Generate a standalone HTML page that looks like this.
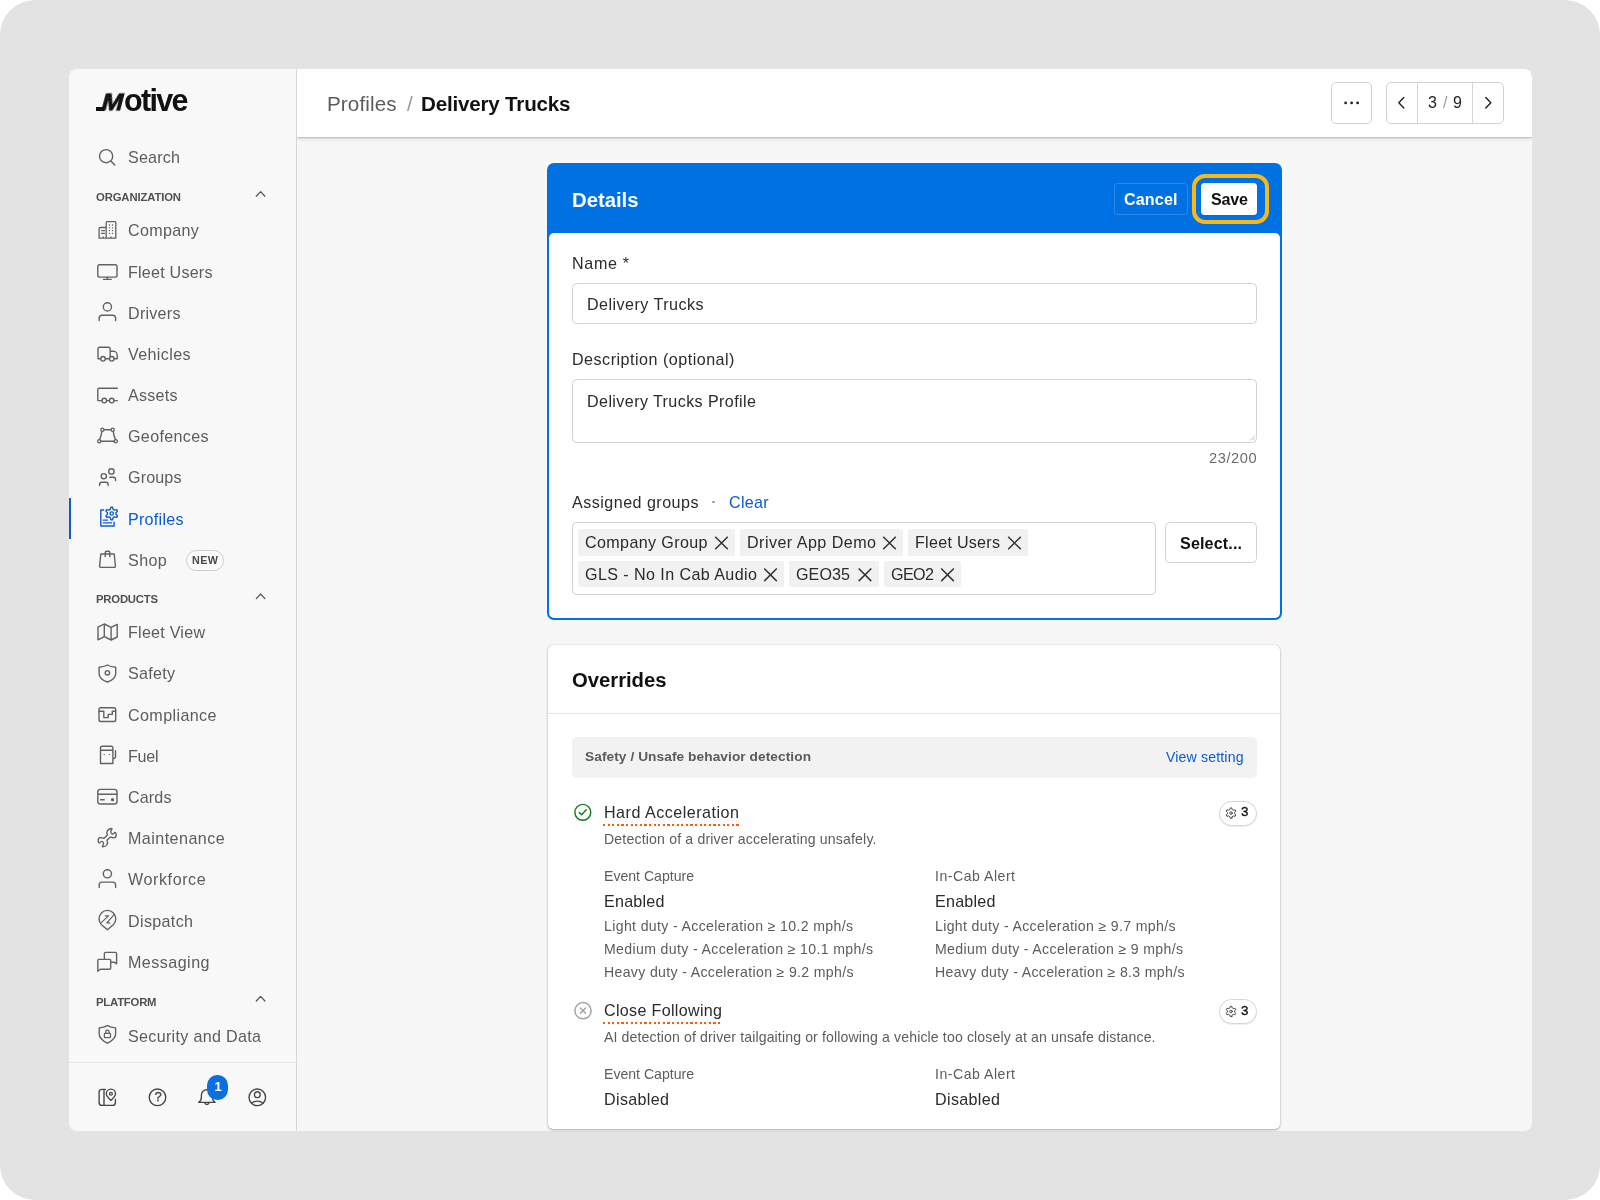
<!DOCTYPE html>
<html lang="en">
<head>
<meta charset="utf-8">
<title>Profiles / Delivery Trucks</title>
<style>
html,body{margin:0;padding:0;}
body{width:1600px;height:1200px;position:relative;overflow:hidden;background:#fff;font-family:"Liberation Sans",sans-serif;}
.t{position:absolute;white-space:nowrap;will-change:transform;}
.a{position:absolute;box-sizing:border-box;}
svg{position:absolute;overflow:visible;}
.ic{fill:none;stroke:#626262;stroke-width:1.4;stroke-linecap:round;stroke-linejoin:round;}
.icb{fill:none;stroke:#0c5bd1;stroke-width:1.4;stroke-linecap:round;stroke-linejoin:round;}
</style>
</head>
<body>
<div class="a" style="left:0;top:0;width:1600px;height:1200px;background:#e3e3e3;border-radius:35px"></div>
<div class="a" style="left:68.5px;top:68.5px;width:1463px;height:1062.5px;background:#f7f7f7;border-radius:8px;overflow:hidden">
<div class="a" style="left:228.5px;top:0;width:1235px;height:68px;background:#fff;box-shadow:0 1px 1.5px rgba(0,0,0,.2),0 2px 5px rgba(0,0,0,.10)"></div>
<div class="a" style="left:0;top:0;width:228.5px;height:1062.5px;background:#f8f8f8;border-right:1px solid #d6d6d6"></div>
<div class="a" style="left:0;top:993.5px;width:228px;height:1px;background:#e6e6e6"></div>
<div class="a" style="left:0;top:429.8px;width:2px;height:40.8px;background:#0c5bd1"></div>
</div>
<nav>
<div class="a" style="left:96.2px;top:107.3px;width:8px;height:4px;background:#111"></div>
<span class="t" style="left:99.6px;top:87.42px;font-size:22.6px;line-height:32px;color:#111;font-weight:700;-webkit-text-stroke:0.8px #111;transform:skewX(-15deg) scaleX(1.13);transform-origin:0 75%;">M</span>
<span class="t" style="left:124px;top:79.32px;font-size:30.5px;line-height:43px;color:#111;font-weight:700;letter-spacing:-1.672px;">otive</span>
<span class="t" style="left:127.9px;top:146.04px;font-size:16.1px;line-height:23px;color:#5c5c5c;letter-spacing:0.200px;">Search</span>
<span class="t" style="left:95.9px;top:189.04px;font-size:11.3px;line-height:16px;color:#505050;font-weight:700;letter-spacing:-0.128px;">ORGANIZATION</span>
<span class="t" style="left:127.9px;top:219.34px;font-size:16.1px;line-height:23px;color:#5c5c5c;letter-spacing:0.302px;">Company</span>
<span class="t" style="left:127.9px;top:260.54px;font-size:16.1px;line-height:23px;color:#5c5c5c;letter-spacing:0.222px;">Fleet Users</span>
<span class="t" style="left:127.9px;top:301.64px;font-size:16.1px;line-height:23px;color:#5c5c5c;letter-spacing:0.255px;">Drivers</span>
<span class="t" style="left:127.9px;top:342.84px;font-size:16.1px;line-height:23px;color:#5c5c5c;letter-spacing:0.364px;">Vehicles</span>
<span class="t" style="left:127.9px;top:384.04px;font-size:16.1px;line-height:23px;color:#5c5c5c;letter-spacing:0.237px;">Assets</span>
<span class="t" style="left:127.9px;top:425.24px;font-size:16.1px;line-height:23px;color:#5c5c5c;letter-spacing:0.332px;">Geofences</span>
<span class="t" style="left:127.9px;top:466.44px;font-size:16.1px;line-height:23px;color:#5c5c5c;letter-spacing:0.144px;">Groups</span>
<span class="t" style="left:127.9px;top:507.54px;font-size:16.1px;line-height:23px;color:#0c5bd1;letter-spacing:0.261px;">Profiles</span>
<span class="t" style="left:127.9px;top:548.74px;font-size:16.1px;line-height:23px;color:#5c5c5c;letter-spacing:0.402px;">Shop</span>
<div class="a" style="left:186px;top:550px;width:37.6px;height:20.5px;border:1px solid #cdcdcd;border-radius:10.3px;background:#fafafa"></div>
<span class="t" style="left:191.6px;top:552.53px;font-size:10.8px;line-height:15px;color:#4a4a4a;font-weight:700;letter-spacing:0.398px;">NEW</span>
<span class="t" style="left:95.7px;top:591.44px;font-size:11.3px;line-height:16px;color:#505050;font-weight:700;letter-spacing:-0.199px;">PRODUCTS</span>
<span class="t" style="left:127.9px;top:621.24px;font-size:16.1px;line-height:23px;color:#5c5c5c;letter-spacing:0.240px;">Fleet View</span>
<span class="t" style="left:127.9px;top:662.44px;font-size:16.1px;line-height:23px;color:#5c5c5c;letter-spacing:0.272px;">Safety</span>
<span class="t" style="left:127.9px;top:703.64px;font-size:16.1px;line-height:23px;color:#5c5c5c;letter-spacing:0.391px;">Compliance</span>
<span class="t" style="left:127.9px;top:744.84px;font-size:16.1px;line-height:23px;color:#5c5c5c;letter-spacing:-0.271px;">Fuel</span>
<span class="t" style="left:127.9px;top:786.04px;font-size:16.1px;line-height:23px;color:#5c5c5c;letter-spacing:0.141px;">Cards</span>
<span class="t" style="left:127.9px;top:827.24px;font-size:16.1px;line-height:23px;color:#5c5c5c;letter-spacing:0.454px;">Maintenance</span>
<span class="t" style="left:127.9px;top:868.44px;font-size:16.1px;line-height:23px;color:#5c5c5c;letter-spacing:0.582px;">Workforce</span>
<span class="t" style="left:127.9px;top:909.64px;font-size:16.1px;line-height:23px;color:#5c5c5c;letter-spacing:0.339px;">Dispatch</span>
<span class="t" style="left:127.9px;top:950.84px;font-size:16.1px;line-height:23px;color:#5c5c5c;letter-spacing:0.457px;">Messaging</span>
<span class="t" style="left:95.7px;top:993.64px;font-size:11.3px;line-height:16px;color:#505050;font-weight:700;letter-spacing:-0.203px;">PLATFORM</span>
<span class="t" style="left:127.9px;top:1024.54px;font-size:16.1px;line-height:23px;color:#5c5c5c;letter-spacing:0.316px;">Security and Data</span>
</nav>
<header>
<span class="t" style="left:327.3px;top:89.20px;font-size:20.6px;line-height:29px;color:#5c5c5c;letter-spacing:0.118px;">Profiles</span>
<span class="t" style="left:406.5px;top:89.20px;font-size:20.6px;line-height:29px;color:#9a9a9a;">/</span>
<span class="t" style="left:421px;top:89.20px;font-size:20.6px;line-height:29px;color:#111;font-weight:700;letter-spacing:-0.198px;">Delivery Trucks</span>
<div class="a" style="left:1331px;top:82px;width:41px;height:41.5px;border:1px solid #d2d2d2;border-radius:5px;background:#fff"></div>
<div class="a" style="left:1386px;top:82px;width:118px;height:41.5px;border:1px solid #d2d2d2;border-radius:5px;background:#fff"></div>
<div class="a" style="left:1417px;top:82.5px;width:1px;height:40.5px;background:#d6d6d6"></div>
<div class="a" style="left:1472px;top:82.5px;width:1px;height:40.5px;background:#d6d6d6"></div>
<span class="t" style="left:1428px;top:92.04px;font-size:16px;line-height:22px;color:#222;">3</span>
<span class="t" style="left:1443px;top:92.04px;font-size:16px;line-height:22px;color:#a0a0a0;">/</span>
<span class="t" style="left:1453px;top:92.04px;font-size:16px;line-height:22px;color:#222;">9</span>
</header>
<main>
<section>
<div class="a" style="left:547px;top:163px;width:734.5px;height:456.5px;background:#0071e3;border-radius:7px"></div>
<div class="a" style="left:549.2px;top:232.9px;width:730.8px;height:384.7px;background:#fff;border-radius:5px"></div>
<span class="t" style="left:571.5px;top:185.99px;font-size:20.3px;line-height:28px;color:#fff;font-weight:700;letter-spacing:-0.003px;">Details</span>
<div class="a" style="left:1113.5px;top:183px;width:74px;height:32px;border:1px solid #2f89ea;border-radius:3.5px"></div>
<span class="t" style="left:1124px;top:187.54px;font-size:16.1px;line-height:23px;color:#fff;font-weight:700;letter-spacing:0.144px;">Cancel</span>
<div class="a" style="left:1192.2px;top:173.6px;width:76.7px;height:50.4px;border:4.6px solid #fab818;border-radius:13px"></div>
<div class="a" style="left:1201px;top:182.5px;width:56px;height:32.7px;background:#fff;border-radius:3.5px"></div>
<span class="t" style="left:1210.5px;top:187.54px;font-size:16.1px;line-height:23px;color:#111;font-weight:700;letter-spacing:-0.198px;">Save</span>
<span class="t" style="left:571.5px;top:251.74px;font-size:16.1px;line-height:23px;color:#2b2b2b;letter-spacing:0.666px;">Name *</span>
<div class="a" style="left:571.5px;top:283px;width:685.5px;height:41.3px;border:1px solid #d3d3d3;border-radius:4.5px;background:#fff"></div>
<span class="t" style="left:586.5px;top:292.84px;font-size:16.1px;line-height:23px;color:#2b2b2b;letter-spacing:0.464px;">Delivery Trucks</span>
<span class="t" style="left:571.5px;top:347.74px;font-size:16.1px;line-height:23px;color:#2b2b2b;letter-spacing:0.496px;">Description (optional)</span>
<div class="a" style="left:571.5px;top:379.2px;width:685.5px;height:64px;border:1px solid #d3d3d3;border-radius:4.5px;background:#fff"></div>
<span class="t" style="left:586.5px;top:389.84px;font-size:16.1px;line-height:23px;color:#2b2b2b;letter-spacing:0.405px;">Delivery Trucks Profile</span>
<span class="t" style="right:343px;top:447.98px;font-size:14.6px;line-height:20px;color:#6b6b6b;letter-spacing:0.572px;">23/200</span>
<span class="t" style="left:571.5px;top:490.54px;font-size:16.1px;line-height:23px;color:#2b2b2b;letter-spacing:0.472px;">Assigned groups</span>
<div class="a" style="left:712px;top:500.5px;width:2.6px;height:2.6px;border-radius:2px;background:#9a9a9a"></div>
<span class="t" style="left:728.5px;top:490.54px;font-size:16.1px;line-height:23px;color:#0c5bd1;letter-spacing:0.258px;">Clear</span>
<div class="a" style="left:571.5px;top:522px;width:584.5px;height:72.8px;border:1px solid #d3d3d3;border-radius:4.5px;background:#fff"></div>
<div class="a" style="left:578px;top:529.2px;width:157px;height:26.6px;background:#f1f1f1;border-radius:2.5px"></div>
<span class="t" style="left:585.2px;top:531.34px;font-size:16.1px;line-height:23px;color:#2b2b2b;letter-spacing:0.367px;">Company Group</span>
<div class="a" style="left:740px;top:529.2px;width:163px;height:26.6px;background:#f1f1f1;border-radius:2.5px"></div>
<span class="t" style="left:747.2px;top:531.34px;font-size:16.1px;line-height:23px;color:#2b2b2b;letter-spacing:0.461px;">Driver App Demo</span>
<div class="a" style="left:908px;top:529.2px;width:120px;height:26.6px;background:#f1f1f1;border-radius:2.5px"></div>
<span class="t" style="left:915.2px;top:531.34px;font-size:16.1px;line-height:23px;color:#2b2b2b;letter-spacing:0.272px;">Fleet Users</span>
<div class="a" style="left:578px;top:560.9px;width:206px;height:26.6px;background:#f1f1f1;border-radius:2.5px"></div>
<span class="t" style="left:585.2px;top:563.04px;font-size:16.1px;line-height:23px;color:#2b2b2b;letter-spacing:0.414px;">GLS - No In Cab Audio</span>
<div class="a" style="left:789px;top:560.9px;width:89.5px;height:26.6px;background:#f1f1f1;border-radius:2.5px"></div>
<span class="t" style="left:796.2px;top:563.04px;font-size:16.1px;line-height:23px;color:#2b2b2b;letter-spacing:0.078px;">GEO35</span>
<div class="a" style="left:883.5px;top:560.9px;width:77.5px;height:26.6px;background:#f1f1f1;border-radius:2.5px"></div>
<span class="t" style="left:890.7px;top:563.04px;font-size:16.1px;line-height:23px;color:#2b2b2b;letter-spacing:-0.578px;">GEO2</span>
<div class="a" style="left:1165px;top:522px;width:92px;height:41px;border:1px solid #d3d3d3;border-radius:4.5px;background:#fff"></div>
<span class="t" style="left:1180px;top:531.54px;font-size:16.1px;line-height:23px;color:#111;font-weight:700;letter-spacing:0.145px;">Select...</span>
</section>
<section>
<div class="a" style="left:547.5px;top:645px;width:732.8px;height:484.3px;background:#fff;border-radius:5px;box-shadow:0 1px 2.5px rgba(0,0,0,.3),0 0 1px rgba(0,0,0,.25)"></div>
<span class="t" style="left:572px;top:665.59px;font-size:20.3px;line-height:28px;color:#111;font-weight:700;letter-spacing:-0.025px;">Overrides</span>
<div class="a" style="left:548px;top:713px;width:732.5px;height:1px;background:#e4e4e4"></div>
<div class="a" style="left:571.5px;top:737px;width:685.5px;height:41px;background:#f2f2f2;border-radius:5px"></div>
<span class="t" style="left:585px;top:747.26px;font-size:13.7px;line-height:19px;color:#5a5a5a;font-weight:700;letter-spacing:0.072px;">Safety / Unsafe behavior detection</span>
<span class="t" style="right:356.5px;top:746.77px;font-size:14.1px;line-height:20px;color:#0c5bd1;letter-spacing:0.161px;">View setting</span>
<span class="t" style="left:603.7px;top:800.84px;font-size:16.1px;line-height:23px;color:#2b2b2b;letter-spacing:0.498px;">Hard Acceleration</span>
<div class="a" style="left:603.2px;top:823.70px;width:136.2px;height:2.1px;background:repeating-linear-gradient(90deg,#fa5c0c 0,#fa5c0c 2.2px,transparent 2.2px,transparent 4.6px)"></div>
<span class="t" style="left:603.7px;top:828.87px;font-size:14.1px;line-height:20px;color:#5c5c5c;letter-spacing:0.167px;">Detection of a driver accelerating unsafely.</span>
<div class="a" style="left:1218.7px;top:800.8px;width:38.3px;height:24.8px;border:1px solid #d6d6d6;border-radius:12.5px;background:#fff;box-shadow:0 1px 1px rgba(0,0,0,.07)"></div>
<span class="t" style="left:1240.9px;top:802.26px;font-size:13.4px;line-height:19px;color:#111;-webkit-text-stroke:0.35px #111;">3</span>
<span class="t" style="left:603.7px;top:999.24px;font-size:16.1px;line-height:23px;color:#2b2b2b;letter-spacing:0.314px;">Close Following</span>
<div class="a" style="left:603.2px;top:1022.1px;width:119.2px;height:2.1px;background:repeating-linear-gradient(90deg,#fa5c0c 0,#fa5c0c 2.2px,transparent 2.2px,transparent 4.6px)"></div>
<span class="t" style="left:603.7px;top:1027.27px;font-size:14.1px;line-height:20px;color:#5c5c5c;letter-spacing:0.129px;">AI detection of driver tailgaiting or following a vehicle too closely at an unsafe distance.</span>
<div class="a" style="left:1218.7px;top:999.2px;width:38.3px;height:24.8px;border:1px solid #d6d6d6;border-radius:12.5px;background:#fff;box-shadow:0 1px 1px rgba(0,0,0,.07)"></div>
<span class="t" style="left:1240.9px;top:1000.66px;font-size:13.4px;line-height:19px;color:#111;-webkit-text-stroke:0.35px #111;">3</span>
<span class="t" style="left:603.7px;top:865.57px;font-size:14.1px;line-height:20px;color:#5c5c5c;letter-spacing:-0.009px;">Event Capture</span>
<span class="t" style="left:935px;top:865.57px;font-size:14.1px;line-height:20px;color:#5c5c5c;letter-spacing:0.507px;">In-Cab Alert</span>
<span class="t" style="left:603.7px;top:889.84px;font-size:16.1px;line-height:23px;color:#2b2b2b;letter-spacing:0.237px;">Enabled</span>
<span class="t" style="left:935px;top:889.84px;font-size:16.1px;line-height:23px;color:#2b2b2b;letter-spacing:0.237px;">Enabled</span>
<span class="t" style="left:603.7px;top:1063.77px;font-size:14.1px;line-height:20px;color:#5c5c5c;letter-spacing:-0.009px;">Event Capture</span>
<span class="t" style="left:935px;top:1063.77px;font-size:14.1px;line-height:20px;color:#5c5c5c;letter-spacing:0.507px;">In-Cab Alert</span>
<span class="t" style="left:603.7px;top:1088.04px;font-size:16.1px;line-height:23px;color:#2b2b2b;letter-spacing:0.339px;">Disabled</span>
<span class="t" style="left:935px;top:1088.04px;font-size:16.1px;line-height:23px;color:#2b2b2b;letter-spacing:0.339px;">Disabled</span>
<span class="t" style="left:603.7px;top:915.97px;font-size:14.1px;line-height:20px;color:#5c5c5c;letter-spacing:0.359px;">Light duty - Acceleration ≥ 10.2 mph/s</span>
<span class="t" style="left:603.7px;top:938.87px;font-size:14.1px;line-height:20px;color:#5c5c5c;letter-spacing:0.361px;">Medium duty - Acceleration ≥ 10.1 mph/s</span>
<span class="t" style="left:603.7px;top:961.77px;font-size:14.1px;line-height:20px;color:#5c5c5c;letter-spacing:0.340px;">Heavy duty - Acceleration ≥ 9.2 mph/s</span>
<span class="t" style="left:935px;top:915.97px;font-size:14.1px;line-height:20px;color:#5c5c5c;letter-spacing:0.351px;">Light duty - Acceleration ≥ 9.7 mph/s</span>
<span class="t" style="left:935px;top:938.87px;font-size:14.1px;line-height:20px;color:#5c5c5c;letter-spacing:0.352px;">Medium duty - Acceleration ≥ 9 mph/s</span>
<span class="t" style="left:935px;top:961.77px;font-size:14.1px;line-height:20px;color:#5c5c5c;letter-spacing:0.340px;">Heavy duty - Acceleration ≥ 8.3 mph/s</span>
</section>
</main>
<svg width="1600" height="1200" viewBox="0 0 1600 1200" style="left:0;top:0">
<circle class="ic" cx="106.1" cy="156.2" r="6.6" />
<path class="ic" d="M110.9 161 L114.8 165" />
<path class="ic" d="M256.3 196.2 L260.6 191.6 L264.9 196.2" style="stroke:#555;stroke-width:1.25"/>
<path class="ic" d="M256.3 598.6 L260.6 594.0 L264.9 598.6" style="stroke:#555;stroke-width:1.25"/>
<path class="ic" d="M256.3 1001.0 L260.6 996.4 L264.9 1001.0" style="stroke:#555;stroke-width:1.25"/>
<path class="ic" d="M106.2 238.2 V222.6 a1 1 0 0 1 1 -1 H114.8 a1 1 0 0 1 1 1 V238.2 Z M99.1 238.2 V228.5 a1 1 0 0 1 1 -1 H106.2 M99.1 238.2 H106.2" style="stroke-width:1.3"/>
<rect x="108.85" y="224.35" width="1.3" height="1.3" rx="0.4" fill="#5e5e5e"/>
<rect x="111.85" y="224.35" width="1.3" height="1.3" rx="0.4" fill="#5e5e5e"/>
<rect x="108.85" y="227.15" width="1.3" height="1.3" rx="0.4" fill="#5e5e5e"/>
<rect x="111.85" y="227.15" width="1.3" height="1.3" rx="0.4" fill="#5e5e5e"/>
<rect x="108.85" y="229.95" width="1.3" height="1.3" rx="0.4" fill="#5e5e5e"/>
<rect x="111.85" y="229.95" width="1.3" height="1.3" rx="0.4" fill="#5e5e5e"/>
<rect x="108.85" y="232.75" width="1.3" height="1.3" rx="0.4" fill="#5e5e5e"/>
<rect x="111.85" y="232.75" width="1.3" height="1.3" rx="0.4" fill="#5e5e5e"/>
<path class="ic" d="M101.6 230.6 H104.6 M101.6 233.4 H104.6" style="stroke-width:1.1"/>
<path class="ic" d="M103.2 238.2 V236.6 M110.9 238.2 V236.6" style="stroke-width:1.3;stroke-linecap:butt"/>
<rect class="ic" x="97.8" y="264.8" width="19.2" height="12.3" rx="1.8" />
<path class="ic" d="M107.4 277.1 V279.3 M103.6 279.4 H111.2" />
<circle class="ic" cx="107.4" cy="306.9" r="4.1" />
<path class="ic" d="M99.2 320.6 V318 a2.8 2.8 0 0 1 2.8 -2.8 H112.8 a2.8 2.8 0 0 1 2.8 2.8 V320.6" />
<circle class="ic" cx="107.4" cy="873.8" r="4.1" />
<path class="ic" d="M99.2 887.5 V884.9 a2.8 2.8 0 0 1 2.8 -2.8 H112.8 a2.8 2.8 0 0 1 2.8 2.8 V887.5" />
<path class="ic" d="M100.6 358.8 H98 V348.6 a1.3 1.3 0 0 1 1.3 -1.3 H108.6 a1.6 1.6 0 0 1 1.6 1.6 V356.6 M110.2 351.3 H113.6 C115.8 351.3 117.2 353.4 117.2 355.2 V358.8 H114.2 M105.4 358.8 H109.4" />
<circle class="ic" cx="103" cy="358.8" r="2.3" />
<circle class="ic" cx="111.8" cy="358.8" r="2.3" />
<path class="ic" d="M117.3 388.2 H99 a1.2 1.2 0 0 0 -1.2 1.2 V400.6 H101.9 M106.6 400.6 H109.4 M114 400.6 H117.3" />
<circle class="ic" cx="104.3" cy="400.6" r="2.3" />
<circle class="ic" cx="111.7" cy="400.6" r="2.3" />
<circle class="ic" cx="102.4" cy="429.8" r="1.6" style="stroke-width:1.3"/>
<circle class="ic" cx="112.7" cy="429.8" r="1.6" style="stroke-width:1.3"/>
<circle class="ic" cx="99.2" cy="441.2" r="1.6" style="stroke-width:1.3"/>
<circle class="ic" cx="115.8" cy="441.2" r="1.6" style="stroke-width:1.3"/>
<path class="ic" d="M104 429.8 H111.1 M101.9 431.4 C101.4 435 100.6 437.5 99.6 439.6 M113.2 431.4 C113.7 435 114.5 437.5 115.4 439.6 M100.8 441.2 H114.2" style="stroke-width:1.4"/>
<circle class="ic" cx="111.4" cy="471.4" r="2.7" style="stroke-width:1.4"/>
<circle class="ic" cx="103.8" cy="476.2" r="2.6" style="stroke-width:1.4"/>
<path class="ic" d="M99.6 485.6 V484.4 a2.2 2.2 0 0 1 2.2 -2.2 H106 a2.2 2.2 0 0 1 2.2 2.2 V485.6 M109.8 477.2 H113.4 a2.2 2.2 0 0 1 2.2 2.2 V480.6" style="stroke-width:1.4"/>
<path class="icb" d="M103.7 510 H100.8 V526 H114.1 V522.2" />
<path class="icb" d="M103.3 520.2 H107.6 M103.3 522.9 H111.6" style="stroke-width:1.3"/>
<path class="icb" d="M112.56 519.74 L110.84 519.74 L110.24 517.55 L108.92 516.78 L106.72 517.36 L105.87 515.88 L107.47 514.26 L107.47 512.74 L105.87 511.12 L106.72 509.64 L108.92 510.22 L110.24 509.45 L110.84 507.26 L112.56 507.26 L113.16 509.45 L114.48 510.22 L116.68 509.64 L117.53 511.12 L115.93 512.74 L115.93 514.26 L117.53 515.88 L116.68 517.36 L114.48 516.78 L113.16 517.55 Z" style="stroke-width:1.35"/>
<circle class="icb" cx="111.7" cy="513.5" r="1.7" style="stroke-width:1.3"/>
<path class="ic" d="M100.8 554 H114.2 L115.4 566 a1.3 1.3 0 0 1 -1.3 1.4 H100.9 a1.3 1.3 0 0 1 -1.3 -1.4 Z M105.2 556.6 V552.6 a1.4 1.4 0 0 1 1.4 -1.4 H108.4 a1.4 1.4 0 0 1 1.4 1.4 V556.6" />
<path class="ic" d="M98 627.2 L104.3 624 L111.1 627.4 L117.2 624.4 V637 L111.1 640 L104.3 636.6 L98 639.8 Z M104.3 624 V636.6 M111.1 627.4 V640" />
<path class="ic" d="M107.4 665 Q103.9 666.8 99.10 667.3 V673.4 C99.10 677.8 103.0 680.4 107.4 682 C111.80 680.4 115.7 677.8 115.7 673.4 V667.3 Q110.9 666.8 107.4 665 Z" />
<circle class="ic" cx="107.4" cy="672.8" r="2.2" />
<rect class="ic" x="99" y="707.8" width="16.7" height="13.7" rx="1.8" />
<path class="ic" d="M99 711.2 H103.8 V717.6 H108.2 V714.4 H112.3 V711.2 H115.7" style="stroke-width:1.4"/>
<path class="ic" d="M100.5 763.5 V748 a1.7 1.7 0 0 1 1.7 -1.7 H111.2 a1.7 1.7 0 0 1 1.7 1.7 V763.5 Z M100.5 750.2 H112.9 M112.9 758.6 H113.6 a1.9 1.9 0 0 0 1.9 -1.9 V750.8" />
<circle class="ic" cx="104.2" cy="754.6" r="0.7" style="fill:#5e5e5e;stroke:none"/>
<circle class="ic" cx="109.5" cy="754.6" r="0.7" style="fill:#5e5e5e;stroke:none"/>
<rect class="ic" x="97.8" y="789.4" width="19.2" height="14.6" rx="2.6" />
<path class="ic" d="M97.8 794.2 H117 M100.6 799.7 H104.2" />
<circle class="ic" cx="112.5" cy="799.7" r="1.6" style="fill:#5e5e5e;stroke:none"/>
<path class="ic" d="M0.2 -2.6 C-1.2 -5.5 0.2 -8.8 4.1 -9.2 Q5 -9.2 4.7 -8.4 C3.4 -7 3 -4.2 5.2 -3.7 C6.2 -3.5 7 -4.4 7.6 -5.2 Q8.6 -5.4 8.9 -3.9 C9.2 -2 8.8 -0.6 7.6 0 C6 0.6 4.2 -1 2.8 -0.4 L-0.2 2.6 C1.2 5.5 -0.2 8.8 -4.1 9.2 Q-5 9.2 -4.7 8.4 C-3.4 7 -3 4.2 -5.2 3.7 C-6.2 3.5 -7 4.4 -7.6 5.2 Q-8.6 5.4 -8.9 3.9 C-9.2 2 -8.8 0.6 -7.6 0 C-6 -0.6 -4.2 1 -2.8 0.4 Z" transform="translate(107.2 837.7)" style="stroke-width:1.35"/>
<path class="ic" d="M107.4 929.8 L101.5 924.8 A8.4 8.4 0 1 1 113.3 924.8 Z" />
<path class="ic" d="M101.2 922.6 L108.6 915.9 H105.2 M114.4 914.4 L106.8 922.9 H109.8" style="stroke-width:1.2"/>
<path class="ic" d="M104.4 958.6 V953.6 a1.2 1.2 0 0 1 1.2 -1.2 H115.4 a1.2 1.2 0 0 1 1.2 1.2 V963.8 L114.2 962.2 H111.4" />
<path class="ic" d="M99 959.4 H109.5 a1.2 1.2 0 0 1 1.2 1.2 V968 a1.2 1.2 0 0 1 -1.2 1.2 H100.4 L97.8 971.2 V960.6 a1.2 1.2 0 0 1 1.2 -1.2 Z" />
<path class="ic" d="M107.4 1025.6 Q103.9 1027.40 99.2 1027.90 V1034.0 C99.2 1038.40 103.0 1041.0 107.4 1043.20 C111.80 1041.0 115.60 1038.40 115.60 1034.0 V1027.90 Q110.9 1027.40 107.4 1025.6 Z" />
<rect class="ic" x="104.4" y="1033.3" width="6.1" height="4.3" rx="0.7" style="stroke-width:1.3"/>
<path class="ic" d="M105.8 1033.3 V1031.7 a1.65 1.65 0 0 1 3.3 0 V1033.3" style="stroke-width:1.3"/>
<path class="ic" d="M105.4 1089.3 H102.1 a3 3 0 0 0 -3 3 V1102.4 a3 3 0 0 0 3 3 H112.4 a3 3 0 0 0 3 -3 V1099.4 M104 1089.3 V1105.4" style="stroke:#444;stroke-width:1.35"/>
<path class="ic" d="M110.9 1100.4 C108 1097.6 106.3 1095.8 106.3 1093.7 a4.6 4.6 0 0 1 9.2 0 C115.5 1095.8 113.8 1097.6 110.9 1100.4 Z" style="stroke:#444;stroke-width:1.35"/>
<circle class="ic" cx="110.9" cy="1093.7" r="1.5" style="stroke:#444;stroke-width:1.1;fill:#bbb"/>
<circle class="ic" cx="157.5" cy="1097.3" r="8.3" style="stroke:#444;stroke-width:1.35"/>
<path class="ic" d="M198.7 1102.4 c1.7 -1 2.7 -2.6 2.7 -5.4 v-1.8 a5.5 5.5 0 0 1 11 0 v1.8 c0 2.8 1 4.4 2.7 5.4 Z M204.7 1102.9 a2.3 2.3 0 0 0 4.4 0" style="stroke:#444;stroke-width:1.35"/>
<circle class="ic" cx="257.3" cy="1097.3" r="8.3" style="stroke:#444;stroke-width:1.35"/>
<circle class="ic" cx="257.3" cy="1094.7" r="2.9" style="stroke:#444;stroke-width:1.35"/>
<path class="ic" d="M251.7 1103.3 a6.6 4.6 0 0 1 11.2 0" style="stroke:#444;stroke-width:1.35"/>
<circle class="ic" cx="1345.6" cy="102.9" r="1.4" style="fill:#222;stroke:none"/>
<circle class="ic" cx="1351.6" cy="102.9" r="1.4" style="fill:#222;stroke:none"/>
<circle class="ic" cx="1357.6" cy="102.9" r="1.4" style="fill:#222;stroke:none"/>
<path class="ic" d="M1403.8 97.6 L1398.8 102.8 L1403.8 108" style="stroke:#222;stroke-width:1.4"/>
<path class="ic" d="M1485.8 97.6 L1490.8 102.8 L1485.8 108" style="stroke:#222;stroke-width:1.4"/>
<path class="ic" d="M715.2 536.7 L727.8 549.3 M727.8 536.7 L715.2 549.3" style="stroke:#333;stroke-width:1.5;stroke-linecap:butt"/>
<path class="ic" d="M883.2 536.7 L895.8 549.3 M895.8 536.7 L883.2 549.3" style="stroke:#333;stroke-width:1.5;stroke-linecap:butt"/>
<path class="ic" d="M1008.2 536.7 L1020.8 549.3 M1020.8 536.7 L1008.2 549.3" style="stroke:#333;stroke-width:1.5;stroke-linecap:butt"/>
<path class="ic" d="M764.2 568.5 L776.8 581.10 M776.8 568.5 L764.2 581.10" style="stroke:#333;stroke-width:1.5;stroke-linecap:butt"/>
<path class="ic" d="M858.7 568.5 L871.3 581.10 M871.3 568.5 L858.7 581.10" style="stroke:#333;stroke-width:1.5;stroke-linecap:butt"/>
<path class="ic" d="M941.2 568.5 L953.8 581.10 M953.8 568.5 L941.2 581.10" style="stroke:#333;stroke-width:1.5;stroke-linecap:butt"/>
<path class="ic" d="M1253.4 439.6 L1254.6 438.4 M1250.6 440 L1254.8 435.8" style="stroke:#aaa;stroke-width:0.7"/>
<circle class="ic" cx="582.8" cy="812.3" r="7.95" style="stroke:#137a22;stroke-width:1.45"/>
<path class="ic" d="M579.2 812.4 L581.6 814.7 L586.3 809.8" style="stroke:#137a22;stroke-width:1.45"/>
<circle class="ic" cx="583" cy="1010.7" r="8.1" style="stroke:#a3a3a3;stroke-width:1.5"/>
<path class="ic" d="M580.4 1008.1 L585.6 1013.3 M585.6 1008.1 L580.4 1013.3" style="stroke:#a3a3a3;stroke-width:1.4"/>
<path class="ic" d="M1231.76 818.24 L1230.24 818.24 L1229.75 816.58 L1228.61 815.93 L1226.92 816.33 L1226.17 815.01 L1227.36 813.76 L1227.36 812.44 L1226.17 811.19 L1226.92 809.87 L1228.61 810.27 L1229.75 809.62 L1230.24 807.96 L1231.76 807.96 L1232.25 809.62 L1233.39 810.27 L1235.08 809.87 L1235.83 811.19 L1234.64 812.44 L1234.64 813.76 L1235.83 815.01 L1235.08 816.33 L1233.39 815.93 L1232.25 816.58 Z" style="stroke:#3a3a3a;stroke-width:0.95"/>
<circle class="ic" cx="1231" cy="813.1" r="1.3" style="stroke:#3a3a3a;stroke-width:0.9"/>
<path class="ic" d="M1231.76 1016.64 L1230.24 1016.64 L1229.75 1014.98 L1228.61 1014.33 L1226.92 1014.73 L1226.17 1013.41 L1227.36 1012.16 L1227.36 1010.84 L1226.17 1009.59 L1226.92 1008.27 L1228.61 1008.67 L1229.75 1008.02 L1230.24 1006.36 L1231.76 1006.36 L1232.25 1008.02 L1233.39 1008.67 L1235.08 1008.27 L1235.83 1009.59 L1234.64 1010.84 L1234.64 1012.16 L1235.83 1013.41 L1235.08 1014.73 L1233.39 1014.33 L1232.25 1014.98 Z" style="stroke:#3a3a3a;stroke-width:0.95"/>
<circle class="ic" cx="1231" cy="1011.5" r="1.3" style="stroke:#3a3a3a;stroke-width:0.9"/>
</svg>
<span class="t" style="left:-42.5px;width:400px;text-align:center;top:1088.26px;font-size:13px;line-height:18px;color:#444;-webkit-text-stroke:0.3px #444;">?</span>
<div class="a" style="left:207.4px;top:1075.3px;width:20.4px;height:24.4px;border-radius:10.2px;background:#0b6fe0"></div>
<span class="t" style="left:17.6px;width:400px;text-align:center;top:1078.36px;font-size:13px;line-height:18px;color:#fff;font-weight:700;">1</span>
</body>
</html>
